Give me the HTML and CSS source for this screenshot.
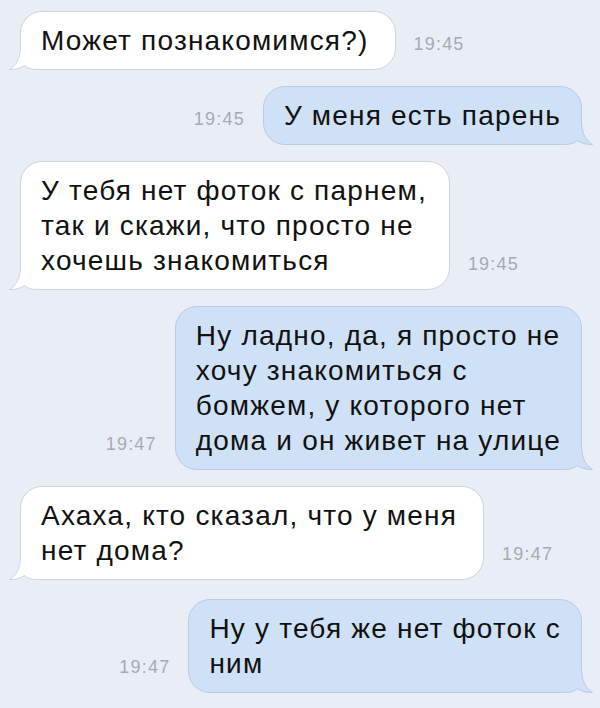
FILE: index.html
```html
<!DOCTYPE html>
<html lang="ru">
<head>
	<meta charset="UTF-8">
	<title>Чат</title>
	<link rel="stylesheet" href="styles.css">
</head>
<body>

	<div class="chat">

		<div class="row in">
			<div class="bubble">Может познакомимся?)
				<svg class="tail" width="30" height="24" viewBox="0 0 30 24"><path class="fill" d="M11,0 C11,14 6,20 0.5,23.5 C7,23.8 12,22 15.5,19.5 C19,22.5 23,23.5 30,23.5 L30,0 Z"/><path class="line" d="M11.5,0 C11.5,14 6,20 0.5,23.5 C7,23.8 12,22 15.5,19.5 C19,22.5 23,23.5 30,23.5"/></svg>
			</div>
			<span class="time">19:45</span>
		</div>

		<div class="row out">
			<span class="time">19:45</span>
			<div class="bubble">У меня есть парень
				<svg class="tail" width="30" height="24" viewBox="0 0 30 24"><path class="fill" d="M19,0 C19,14 24,20 29.5,23.5 C23,23.8 18,22 14.5,19.5 C11,22.5 7,23.5 0,23.5 L0,0 Z"/><path class="line" d="M18.5,0 C18.5,14 24,20 29.5,23.5 C23,23.8 18,22 14.5,19.5 C11,22.5 7,23.5 0,23.5"/></svg>
			</div>
		</div>

		<div class="row in">
			<div class="bubble wide">У тебя нет фоток с парнем,<br>так и скажи, что просто не<br>хочешь знакомиться
				<svg class="tail" width="30" height="24" viewBox="0 0 30 24"><path class="fill" d="M11,0 C11,14 6,20 0.5,23.5 C7,23.8 12,22 15.5,19.5 C19,22.5 23,23.5 30,23.5 L30,0 Z"/><path class="line" d="M11.5,0 C11.5,14 6,20 0.5,23.5 C7,23.8 12,22 15.5,19.5 C19,22.5 23,23.5 30,23.5"/></svg>
			</div>
			<span class="time">19:45</span>
		</div>

		<div class="row out">
			<span class="time">19:47</span>
			<div class="bubble">Ну ладно, да, я просто не<br>хочу знакомиться с<br>бомжем, у которого нет<br>дома и он живет на улице
				<svg class="tail" width="30" height="24" viewBox="0 0 30 24"><path class="fill" d="M19,0 C19,14 24,20 29.5,23.5 C23,23.8 18,22 14.5,19.5 C11,22.5 7,23.5 0,23.5 L0,0 Z"/><path class="line" d="M18.5,0 C18.5,14 24,20 29.5,23.5 C23,23.8 18,22 14.5,19.5 C11,22.5 7,23.5 0,23.5"/></svg>
			</div>
		</div>

		<div class="row in">
			<div class="bubble">Ахаха, кто сказал, что у меня<br>нет дома?
				<svg class="tail" width="30" height="24" viewBox="0 0 30 24"><path class="fill" d="M11,0 C11,14 6,20 0.5,23.5 C7,23.8 12,22 15.5,19.5 C19,22.5 23,23.5 30,23.5 L30,0 Z"/><path class="line" d="M11.5,0 C11.5,14 6,20 0.5,23.5 C7,23.8 12,22 15.5,19.5 C19,22.5 23,23.5 30,23.5"/></svg>
			</div>
			<span class="time">19:47</span>
		</div>

		<div class="row out last">
			<span class="time">19:47</span>
			<div class="bubble">Ну у тебя же нет фоток с<br>ним
				<svg class="tail" width="30" height="24" viewBox="0 0 30 24"><path class="fill" d="M19,0 C19,14 24,20 29.5,23.5 C23,23.8 18,22 14.5,19.5 C11,22.5 7,23.5 0,23.5 L0,0 Z"/><path class="line" d="M18.5,0 C18.5,14 24,20 29.5,23.5 C23,23.8 18,22 14.5,19.5 C11,22.5 7,23.5 0,23.5"/></svg>
			</div>
		</div>

	</div>

</body>
</html>
```

FILE: styles.css
```css
body{
	background-color: #e9eef6;
	font-family: "Liberation Sans", Arial, sans-serif;
	padding: 0;
	margin: 0;
}

.chat{
	display: flex;
	flex-direction: column;
	gap: 16px;
	padding: 11px 18px 0 20px;
}

.row{
	display: flex;
	align-items: flex-end;
	gap: 18px;
}

.row.out{
	justify-content: flex-end;
}

.row.last{
	margin-top: 3px;
}

.bubble{
	position: relative;
	font-size: 28px;
	letter-spacing: 1.2px;
	line-height: 35px;
	color: #111;
	padding: 11px 26px 11px 20px;
	border-radius: 22px;
	border: 1px solid #cdd3dc;
	background-color: #fff;
}

.bubble.wide{
	padding-right: 22px;
}

.row.out .bubble{
	background-color: #cfe1f7;
	border-color: #b8cbe2;
	padding: 11px 20px 11px 20px;
}

.time{
	font-size: 18px;
	letter-spacing: 1.2px;
	line-height: 20px;
	color: #a6aab1;
	padding-bottom: 16px;
}

.tail{
	position: absolute;
	bottom: -1px;
	left: -12px;
}

.row.out .tail{
	left: auto;
	right: -12px;
}

.tail .fill{
	fill: #fff;
}

.tail .line{
	fill: none;
	stroke: #cdd3dc;
	stroke-width: 1;
}

.row.out .tail .fill{
	fill: #cfe1f7;
}

.row.out .tail .line{
	stroke: #b8cbe2;
}
```
